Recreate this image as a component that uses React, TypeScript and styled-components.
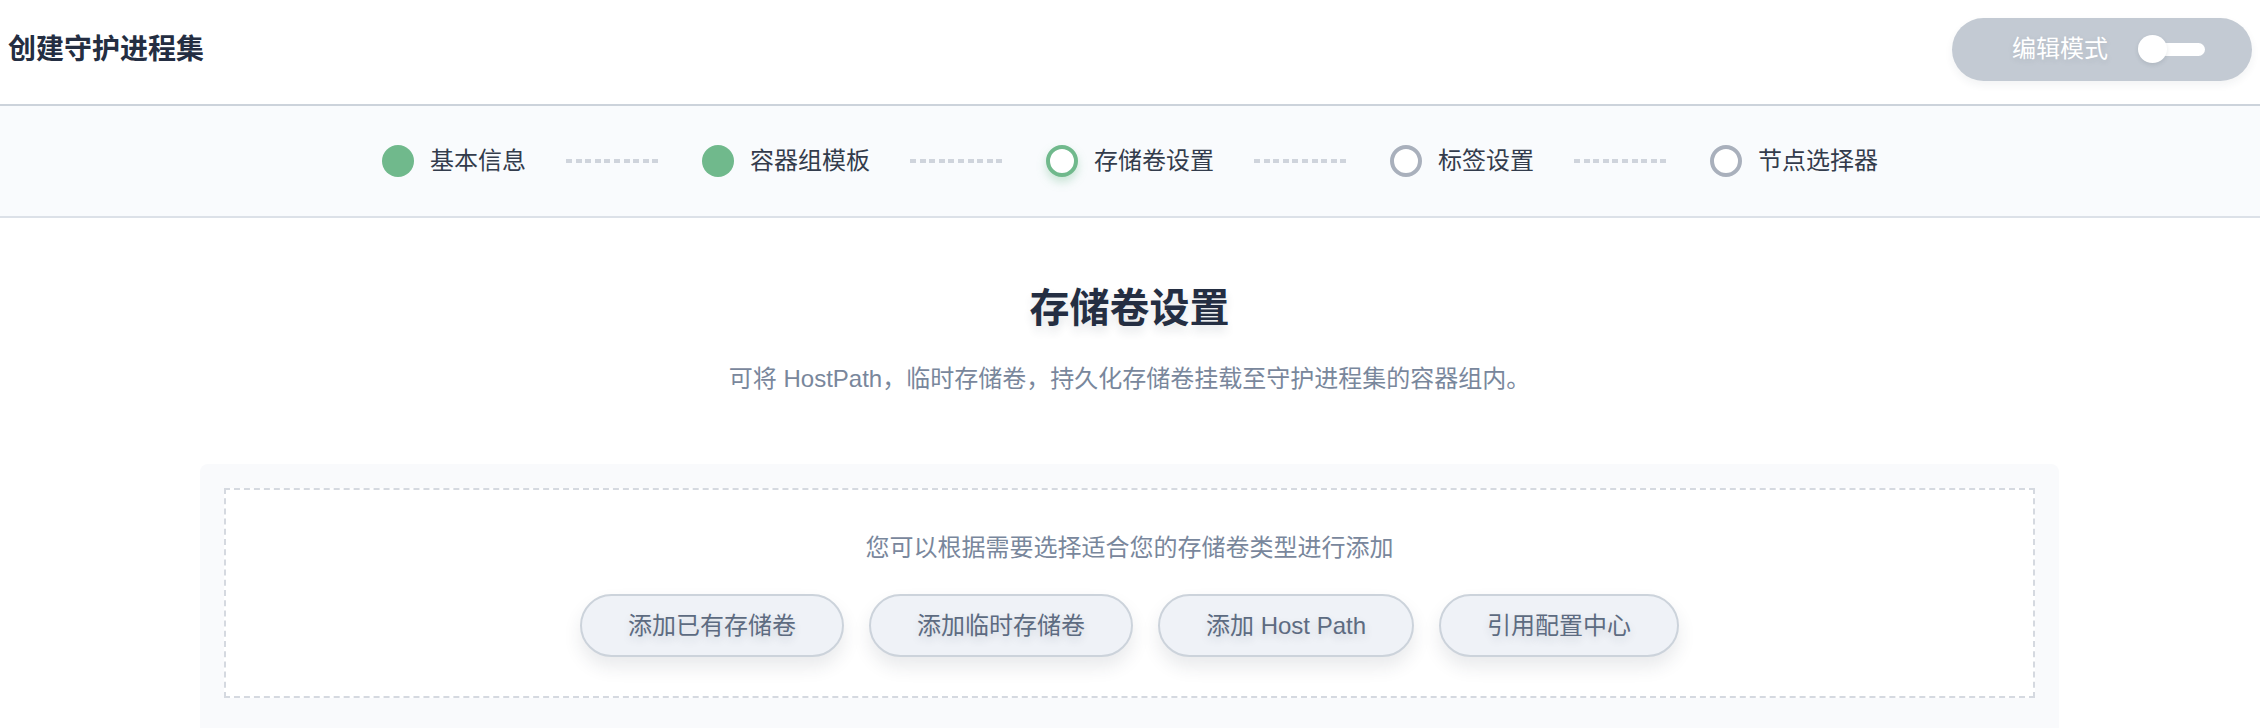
import React from "react";
import styled, { createGlobalStyle } from "styled-components";

const GlobalStyle = createGlobalStyle`
  html, body {
    margin: 0;
    padding: 0;
    background: #ffffff;
    overflow: hidden;
  }
  body {
    font-family: "Liberation Sans", "Noto Sans CJK SC", sans-serif;
    color: #242e42;
  }
  * { box-sizing: border-box; }
`;

const Page = styled.div`
  width: 2260px;
  height: 728px;
  overflow: hidden;
  display: flex;
  flex-direction: column;
`;

const Header = styled.header`
  height: 106px;
  display: flex;
  align-items: center;
  justify-content: space-between;
  padding: 0 8px 0 8px;
  border-bottom: 2px solid #ccd3db;
  flex-shrink: 0;
`;

const PageTitle = styled.h1`
  margin: 0 0 4px 0;
  font-size: 28px;
  line-height: 40px;
  font-weight: 700;
  color: #242e42;
`;

const EditToggle = styled.button`
  width: 300px;
  height: 63px;
  margin-bottom: 6px;
  border: none;
  border-radius: 32px;
  background: #c3cad3;
  display: flex;
  align-items: center;
  padding: 0 0 0 60px;
  gap: 30px;
  box-shadow: 0 4px 8px rgba(36, 46, 66, 0.06);
  cursor: pointer;
  font-family: inherit;
`;

const ToggleLabel = styled.span`
  font-size: 24px;
  line-height: 32px;
  color: #ffffff;
  text-shadow: 0 2px 6px rgba(36, 46, 66, 0.1);
`;

const Switch = styled.span`
  position: relative;
  width: 67px;
  height: 28px;
  display: block;

  &::before {
    content: "";
    position: absolute;
    right: 0;
    top: 8px;
    width: 54px;
    height: 13px;
    border-radius: 7px;
    background: #ffffff;
  }

  &::after {
    content: "";
    position: absolute;
    left: 0;
    top: 0;
    width: 29px;
    height: 28px;
    border-radius: 50%;
    background: #ffffff;
    box-shadow: 0 2px 4px rgba(36, 46, 66, 0.12);
  }
`;

const StepsBar = styled.nav`
  height: 112px;
  flex-shrink: 0;
  background: #f9fbfd;
  border-bottom: 2px solid #dce1e8;
  display: flex;
  align-items: center;
  justify-content: center;
`;

const Step = styled.div`
  display: flex;
  align-items: center;
  gap: 16px;
`;

type StepState = "done" | "current" | "pending";

const StepDot = styled.span<{ $state: StepState }>`
  width: 32px;
  height: 32px;
  border-radius: 50%;
  flex-shrink: 0;
  background: ${(p) => (p.$state === "done" ? "#70b98c" : "#ffffff")};
  border: ${(p) =>
    p.$state === "done"
      ? "none"
      : p.$state === "current"
      ? "4px solid #70b98c"
      : "4px solid #a9b0bc"};
  box-shadow: ${(p) =>
    p.$state === "current" ? "0 5px 10px rgba(112, 185, 140, 0.35)" : "none"};
`;

const StepLabel = styled.span`
  font-size: 24px;
  line-height: 32px;
  color: #333c4c;
  white-space: nowrap;
`;

const StepConnector = styled.span`
  width: 96px;
  height: 4px;
  margin: 0 40px;
  flex-shrink: 0;
  background: repeating-linear-gradient(
    to right,
    #cfd4dc 0 6px,
    transparent 6px 9.6px
  );
`;

const Main = styled.main`
  display: flex;
  flex-direction: column;
  align-items: center;
  padding: 62px 201px 0 200px;
`;

const SectionTitle = styled.h2`
  margin: 0;
  font-size: 40px;
  line-height: 56px;
  font-weight: 700;
  color: #242e42;
  text-shadow: 0 6px 10px rgba(36, 46, 66, 0.12);
`;

const SectionDesc = styled.p`
  margin: 27px 0 0 0;
  font-size: 24px;
  line-height: 32px;
  color: #79879c;
`;

const Card = styled.section`
  align-self: stretch;
  margin-top: 69px;
  background: #f9fafc;
  border-radius: 8px;
  padding: 24px 24px 60px 24px;
`;

const DropZone = styled.div`
  border: 2px dashed #d5d9e0;
  background: #ffffff;
  display: flex;
  flex-direction: column;
  align-items: center;
  padding: 42px 0 39px 0;
`;

const Hint = styled.p`
  margin: 0;
  font-size: 24px;
  line-height: 32px;
  color: #79879c;
`;

const ButtonRow = styled.div`
  display: flex;
  gap: 25px;
  margin-top: 30px;
`;

const PillButton = styled.button`
  height: 63px;
  padding: 0 46px;
  border: 2px solid #ccd3db;
  border-radius: 32px;
  background: #eff2f7;
  color: #5d6b81;
  font-family: inherit;
  font-size: 24px;
  line-height: 32px;
  white-space: nowrap;
  cursor: pointer;
  text-shadow: 0 4px 8px rgba(36, 46, 66, 0.15);
  box-shadow: 0 10px 18px rgba(36, 46, 66, 0.1);
`;

const steps: { label: string; state: StepState }[] = [
  { label: "基本信息", state: "done" },
  { label: "容器组模板", state: "done" },
  { label: "存储卷设置", state: "current" },
  { label: "标签设置", state: "pending" },
  { label: "节点选择器", state: "pending" },
];

const actions = ["添加已有存储卷", "添加临时存储卷", "添加 Host Path", "引用配置中心"];

export default function App() {
  return (
    <>
      <GlobalStyle />
      <Page>
        <Header>
          <PageTitle>创建守护进程集</PageTitle>
          <EditToggle type="button">
            <ToggleLabel>编辑模式</ToggleLabel>
            <Switch />
          </EditToggle>
        </Header>
        <StepsBar>
          {steps.map((s, i) => (
            <React.Fragment key={s.label}>
              {i > 0 && <StepConnector />}
              <Step>
                <StepDot $state={s.state} />
                <StepLabel>{s.label}</StepLabel>
              </Step>
            </React.Fragment>
          ))}
        </StepsBar>
        <Main>
          <SectionTitle>存储卷设置</SectionTitle>
          <SectionDesc>
            可将 HostPath，临时存储卷，持久化存储卷挂载至守护进程集的容器组内。
          </SectionDesc>
          <Card>
            <DropZone>
              <Hint>您可以根据需要选择适合您的存储卷类型进行添加</Hint>
              <ButtonRow>
                {actions.map((a) => (
                  <PillButton key={a} type="button">
                    {a}
                  </PillButton>
                ))}
              </ButtonRow>
            </DropZone>
          </Card>
        </Main>
      </Page>
    </>
  );
}
